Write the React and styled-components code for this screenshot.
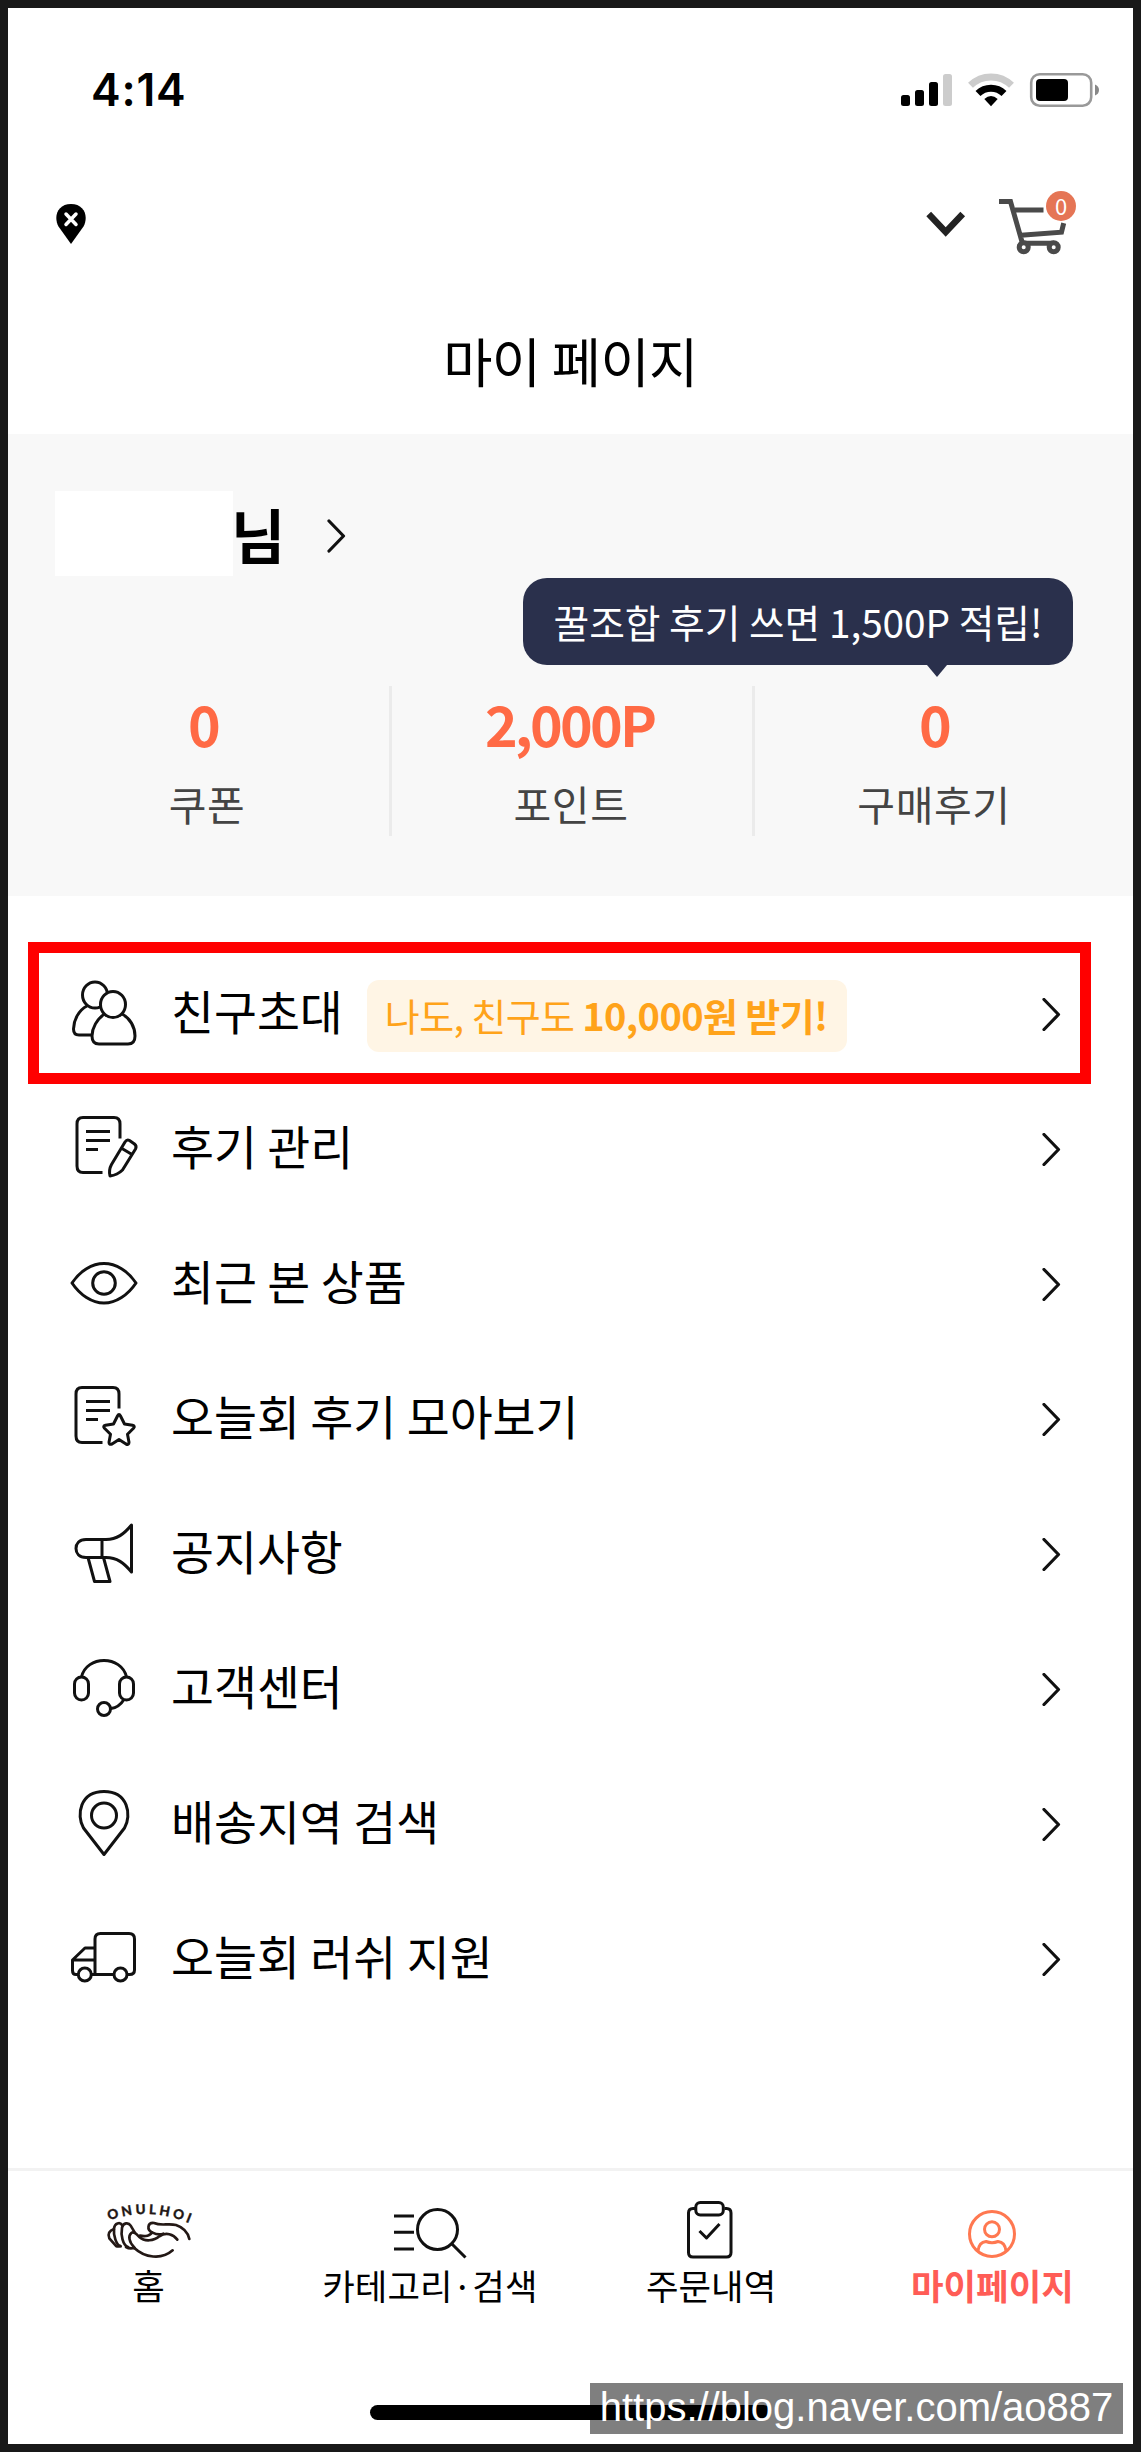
import React from "react";
import styled, { createGlobalStyle } from "styled-components";

const GlobalStyle = createGlobalStyle`
  * { box-sizing: border-box; }
  body { margin: 0; background: #fff; }
`;

const Screen = styled.div`
  position: relative;
  display: flex;
  flex-direction: column;
  width: 1141px;
  height: 2452px;
  overflow: hidden;
  border: 8px solid #191919;
  background: #fff;
  color: #000;
  font-family: "Noto Sans CJK KR", "Noto Sans KR", sans-serif;
  white-space: nowrap;
`;

const StatusBar = styled.header`
  display: flex;
  align-items: center;
  justify-content: space-between;
  height: 164px;
  padding: 0 34px 0 83px;
`;

const Clock = styled.time`
  font: 600 44.5px/52px Inter, sans-serif;
  letter-spacing: 0.8px;
`;

const Indicators = styled.svg`
  display: block;
  width: 199px;
  height: 36px;
`;

const LocationBar = styled.div`
  display: flex;
  align-items: center;
  justify-content: space-between;
  height: 102px;
  padding: 0 55px 0 48px;
`;

const PinMark = styled.svg`
  display: block;
  width: 30px;
  height: 42px;
  margin-top: 2px;
`;

const Actions = styled.div`
  display: flex;
  align-items: center;
  gap: 33px;
`;

const DownArrow = styled.svg`
  display: block;
  width: 40px;
  height: 26px;
  margin-top: 2px;
`;

const CartButton = styled.div`
  position: relative;
  width: 79px;
  height: 66px;
`;

const CartCount = styled.span`
  position: absolute;
  top: 1px;
  right: 2px;
  width: 30px;
  height: 30px;
  border-radius: 50%;
  background: #e57555;
  color: #fff;
  font-size: 22px;
  line-height: 28px;
  text-align: center;
`;

const Title = styled.h1`
  margin: 0;
  height: 160px;
  padding-top: 48px;
  font-size: 53.5px;
  font-weight: 400;
  line-height: 76px;
  text-align: center;
  letter-spacing: -0.6px;
`;

const Profile = styled.section`
  display: flex;
  flex-direction: column;
  height: 462px;
  padding-top: 57px;
  background: #f8f8f8;
`;

const NameRow = styled.div`
  display: flex;
  align-items: center;
  height: 85px;
  padding-left: 47px;
`;

const HiddenName = styled.span`
  width: 178px;
  height: 85px;
  background: #fff;
`;

const Honorific = styled.strong`
  margin: 1px 0 0 -2px;
  font-size: 59px;
  font-weight: 700;
  line-height: 84px;
`;

const NameArrow = styled.svg`
  display: block;
  width: 20px;
  height: 34px;
  margin: 4px 0 0 42px;
`;

const Stats = styled.div`
  display: grid;
  grid-template-columns: 384px 363px 1fr;
  height: 150px;
  margin-top: 110px;
`;

const Stat = styled.div`
  display: flex;
  flex-direction: column;
  align-items: center;
  padding-left: ${(p) => p.$before || 0}px;
  padding-right: ${(p) => p.$after || 0}px;
  border-right: ${(p) => (p.$last ? "0" : "3px solid #ebebeb")};
`;

const StatValue = styled.strong`
  margin-top: -1px;
  padding-right: ${(p) => p.$after || 0}px;
  color: #ff6a45;
  font-size: 55.5px;
  font-weight: 700;
  line-height: 76px;
  letter-spacing: -2.8px;
`;

const StatLabel = styled.span`
  margin-top: 12px;
  color: #444;
  font-size: 41px;
  line-height: 60px;
  letter-spacing: 0.6px;
`;

const Tooltip = styled.div`
  position: absolute;
  top: 570px;
  left: 515px;
  width: 550px;
  height: 87px;
  border-radius: 24px;
  background: #2a304c;
  color: #fff;
  font-size: 38.8px;
  line-height: 86px;
  text-align: center;
  letter-spacing: -0.05px;

  &::after {
    content: "";
    position: absolute;
    top: 87px;
    left: 404px;
    border: 10px solid transparent;
    border-top: 12px solid #2a304c;
    border-bottom: 0;
  }
`;

const Menu = styled.ul`
  list-style: none;
  margin: 0;
  padding: 51px 0 0;
  flex: 1;
`;

const MenuRow = styled.li`
  display: flex;
  align-items: center;
  height: 135px;
  padding: 0 71px 0 60px;
`;

const RowIcon = styled.svg`
  display: block;
  flex: none;
  width: 72px;
  height: 79px;
  fill: none;
  stroke: #111;
  stroke-width: 3;
  stroke-linejoin: round;
  stroke-linecap: butt;
`;

const RowLabel = styled.span`
  margin-left: 31px;
  padding-bottom: 9px;
  font-size: 46.7px;
  line-height: 68px;
`;

const Promo = styled.span`
  width: 480px;
  height: 72px;
  margin: 2px 0 0 24px;
  padding-left: 18px;
  border-radius: 12px;
  background: #fff5e5;
  color: #ffa31a;
  font-size: 38px;
  line-height: 70px;
  letter-spacing: -0.62px;
`;

const RowArrow = styled.svg`
  display: block;
  width: 20px;
  height: 33px;
  margin-left: auto;
`;

const Highlight = styled.div`
  position: absolute;
  top: 934px;
  left: 20px;
  width: 1062.5px;
  height: 142px;
  border: 11px solid #f00;
`;

const TabBar = styled.nav`
  display: grid;
  grid-template-columns: repeat(4, 1fr);
  height: 276px;
  padding-top: 24px;
  border-top: 3px solid #f2f2f2;
`;

const Tab = styled.div`
  display: flex;
  flex-direction: column;
  align-items: center;
`;

const TabIcon = styled.svg`
  display: block;
  width: 100px;
  height: 69px;
  fill: none;
  stroke: ${(p) => p.$tone || "#111"};
  stroke-width: 3;
  stroke-linejoin: round;
`;

const TabLabel = styled.span`
  color: ${(p) => (p.$active ? "#ff5c56" : "#000")};
  font-size: 35.4px;
  font-weight: ${(p) => (p.$active ? 700 : 400)};
  line-height: 42px;
`;

const HomeIndicator = styled.div`
  position: absolute;
  top: 2397px;
  left: 362px;
  width: 401px;
  height: 15px;
  border-radius: 8px;
  background: #000;
`;

const Watermark = styled.div`
  position: absolute;
  top: 2375px;
  left: 582px;
  width: 533px;
  height: 51px;
  background: rgba(0, 0, 0, 0.5);
  color: #fff;
  font: 40px/49px "Liberation Sans", Arial, sans-serif;
  text-align: center;
`;

const Chevron = ({ as: Box }) => (
  <Box viewBox="0 0 20 33">
    <path d="M2 1.5 16.5 16.5 2 31.5" fill="none" stroke="#111" strokeWidth="3.2" strokeLinecap="round" strokeLinejoin="round" />
  </Box>
);

const icons = {
  friends: (
    <>
      <ellipse cx="27" cy="20" rx="12.500" ry="13" />
      <path d="M19 31C11 35 5.500 45 5.500 54c0 4 2 6 5.500 6H24" />
      <path d="M36.500 39C29 44 24 53 24 61c0 5 2.500 8 7 8h29c5 0 7-3 7-8 0-9-5-18-13-22" fill="#fff" />
      <ellipse cx="45" cy="29.500" rx="12.500" ry="13" fill="#fff" />
    </>
  ),
  write: (
    <>
      <path d="M52 28.500V14q0-6.500-6-6.500H15q-6 0-6 6.500v42q0 6.500 6 6.500h19.500M18 21.500h24M18 30.500h24M18 39.500h12" />
      <path d="M42 66q-1.500-6 1.500-11.500L57 32q2-3 4.500-1.500l5 3.500q2.500 2 1 5L54.500 60q-5 5-12.500 6ZM54 38.500l10 6" />
    </>
  ),
  eye: (
    <>
      <path d="M4 38C12 26 24 18.500 36 18.500S60 26 68 38C60 50 48 58 36 58S12 50 4 38Z" />
      <circle cx="36" cy="38" r="11.300" />
    </>
  ),
  star: (
    <>
      <path d="M51 28.500V14q0-6.500-6-6.500H14q-6 0-6 6.500v42q0 6.500 6 6.500h20.500M18 21.500h24M18 30.500h24M18 39.500h12" />
      <path d="M49.500 36q1.500-3 3 0l4 8 8 1.300q3 .7 1 3l-6 6 1.500 8q0 3-3 1.700L51 59.500 44 64q-3 1.200-3-1.700l1.500-8-6-6q-2-2.300 1-3l8-1.300Z" />
    </>
  ),
  notice: (
    <path d="M34 24.500H18C11 24.500 8 29 8 33.500s3 9 10 9h20C49 42.500 56 48 63.500 57V10C56 19 49 24.500 38 24.500h-4v18M20 42.500l6.500 24H42l-6.500-24" />
  ),
  support: (
    <>
      <path d="M13.500 27C16 16 26 10.500 36 10.500S56 16 58.500 27M56 49.500q-5 8-13 9" />
      <rect x="6.500" y="27" width="14" height="23" rx="7" />
      <rect x="51.500" y="27" width="14" height="23" rx="7" />
      <circle cx="36" cy="59" r="6.500" />
    </>
  ),
  area: (
    <>
      <path d="M36 69.500 15.500 43C8 30 12 6.500 36 6.500S64 30 56.500 43Z" />
      <circle cx="36" cy="30.500" r="12.500" />
    </>
  ),
  truck: (
    <>
      <path d="M27 54.500V19q0-5.500 5.500-5.500H61q5.500 0 5.500 5.500v31q0 4.500-5 4.500H59M46 54.500H24M10 54.500H8q-3.500 0-3.500-4V40L17 28h10M4.500 40H27" />
      <circle cx="16.800" cy="54.500" r="6.500" />
      <circle cx="52.500" cy="54.500" r="6.500" />
    </>
  ),
};

const rows = [
  { icon: "friends", label: "친구초대", promo: true },
  { icon: "write", label: "후기 관리" },
  { icon: "eye", label: "최근 본 상품" },
  { icon: "star", label: "오늘회 후기 모아보기" },
  { icon: "notice", label: "공지사항" },
  { icon: "support", label: "고객센터" },
  { icon: "area", label: "배송지역 검색" },
  { icon: "truck", label: "오늘회 러쉬 지원" },
];

const HomeLogo = () => (
  <TabIcon viewBox="99 2195 100 69" $tone="#231815">
    <path id="logo-arc" d="M109 2220.500Q149 2206 191 2224" stroke="none" />
    <text fill="#231815" strokeWidth="0.3" fontFamily="Lato, sans-serif" fontWeight="900" fontSize="13.500">
      <textPath href="#logo-arc" textLength="82">ONULHOI</textPath>
    </text>
    <g transform="translate(100 2195) scale(.33333)" strokeWidth="8" strokeLinecap="round">
      <path d="M42 102C28 106 22 118 28 130L48 153Q54 156 60 153" />
      <path d="M62 154C48 150 40 120 42 100 44 84 60 80 66 90" />
      <path d="M84 156C68 150 62 120 66 98 70 82 86 82 92 92L104 112" />
      <path d="M78 156q10 6 24 3M104 159C86 140 84 122 94 114 102 108 110 118 118 126 134 141 162 138 178 124 198 110 220 118 232 134" />
      <path d="M102 158C134 188 184 196 218 166" />
      <path d="M120 122C136 126 152 122 156 112 140 104 142 82 162 84 184 94 204 84 228 90 252 98 264 114 268 132" />
      <path d="M156 112Q176 122 190 116" />
    </g>
  </TabIcon>
);

export default function App() {
  return (
    <>
      <GlobalStyle />
      <Screen>
        <StatusBar>
          <Clock>4:14</Clock>
          <Indicators viewBox="900 72 199 36">
            <rect x="901" y="95" width="9" height="11" rx="2.500" />
            <rect x="915" y="90" width="9" height="16" rx="2.500" />
            <rect x="929" y="82" width="9" height="24" rx="2.500" />
            <rect x="943" y="74" width="9" height="32" rx="2.500" fill="#ccc" />
            <g fill="none" strokeWidth="7">
              <path d="M970.500 85.300a29.300 29.300 0 0 1 41 0" stroke="#ccc" />
              <path d="M978 93.500a18.500 18.500 0 0 1 26 0" stroke="#000" />
            </g>
            <path d="M991 106.300 984.300 99q6.700-6 13.400 0Z" />
            <rect x="1031.200" y="74.200" width="60" height="31.500" rx="8.500" fill="none" stroke="#999" strokeWidth="2.600" />
            <rect x="1036" y="79" width="32" height="22" rx="4" />
            <path d="M1095 84.500q4 1.500 4 5.500t-4 5.500Z" fill="#888" />
          </Indicators>
        </StatusBar>

        <LocationBar>
          <PinMark viewBox="56 203 30 42">
            <path d="M71 244 58.500 226.500C53 216 58 204 71 204s18 12 12.500 22.500Z" />
            <path d="m66 214 10 10.500m0-10.500-10 10.500" stroke="#fff" strokeWidth="3.500" strokeLinecap="round" />
          </PinMark>
          <Actions>
            <DownArrow viewBox="926 211 40 26">
              <path d="m928.700 214 17 18 17-18" fill="none" stroke="#222" strokeWidth="6.500" />
            </DownArrow>
            <CartButton>
              <svg width="79" height="66" viewBox="999 190 79 66" fill="none" stroke="#4a4a4a" strokeWidth="5">
                <path d="M999 201.500h11.500l12 42M1015 210h28.500M1021 235.200l40.500-3 2.200-9M1021 243.200h33" />
                <circle cx="1023.700" cy="247.300" r="4.500" fill="#fff" />
                <circle cx="1053.700" cy="247.300" r="4.500" fill="#fff" />
              </svg>
              <CartCount>0</CartCount>
            </CartButton>
          </Actions>
        </LocationBar>

        <Title>마이 페이지</Title>

        <Profile>
          <NameRow>
            <HiddenName />
            <Honorific>님</Honorific>
            <Chevron as={NameArrow} />
          </NameRow>
          <Stats>
            <Stat $before={17}>
              <StatValue $after={8}>0</StatValue>
              <StatLabel>쿠폰</StatLabel>
            </Stat>
            <Stat $after={2}>
              <StatValue $after={3}>2,000P</StatValue>
              <StatLabel>포인트</StatLabel>
            </Stat>
            <Stat $after={20} $last>
              <StatValue>0</StatValue>
              <StatLabel>구매후기</StatLabel>
            </Stat>
          </Stats>
        </Profile>
        <Tooltip>꿀조합 후기 쓰면 1,500P 적립!</Tooltip>

        <Menu>
          {rows.map((row) => (
            <MenuRow key={row.icon}>
              <RowIcon viewBox="0 0 72 79">{icons[row.icon]}</RowIcon>
              <RowLabel>{row.label}</RowLabel>
              {row.promo && (
                <Promo>
                  나도, 친구도 <b>10,000원 받기!</b>
                </Promo>
              )}
              <Chevron as={RowArrow} />
            </MenuRow>
          ))}
        </Menu>
        <Highlight />

        <TabBar>
          <Tab>
            <HomeLogo />
            <TabLabel>홈</TabLabel>
          </Tab>
          <Tab>
            <TabIcon viewBox="380 2195 100 69">
              <path d="M394 2216h20M394 2232.300h20M394 2249h20M452 2244l13.500 13.500" />
              <circle cx="437.500" cy="2229.500" r="20" />
            </TabIcon>
            <TabLabel>카테고리·검색</TabLabel>
          </Tab>
          <Tab>
            <TabIcon viewBox="661 2195 100 69">
              <path d="M695 2208.500h-2q-4.500 0-4.500 4.500v39.500q0 4.500 4.500 4.500h33.500q4.500 0 4.500-4.500V2213q0-4.500-4.500-4.500h-2" />
              <rect x="695.800" y="2202.500" width="27.500" height="12.500" rx="4.500" />
              <path d="m699.500 2231 7 7 13-14" />
            </TabIcon>
            <TabLabel>주문내역</TabLabel>
          </Tab>
          <Tab>
            <TabIcon viewBox="942 2195 100 69" $tone="#ff7850">
              <circle cx="992" cy="2234" r="22.500" />
              <circle cx="992" cy="2229.300" r="7.500" />
              <path d="M978 2251q1-9 8-9.500 6 2.500 12 0 7 .5 8 9.500" />
            </TabIcon>
            <TabLabel $active>마이페이지</TabLabel>
          </Tab>
        </TabBar>

        <HomeIndicator />
        <Watermark>https://blog.naver.com/ao887</Watermark>
      </Screen>
    </>
  );
}
